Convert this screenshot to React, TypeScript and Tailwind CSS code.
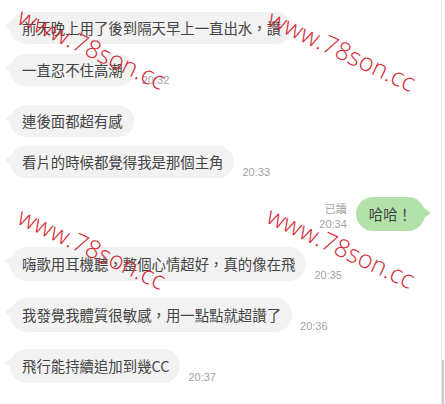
import React from "react";

const CJK = { fontFamily: '"Noto Sans CJK TC", "Noto Sans", sans-serif' };

function Left({ text, time, h, mt }: { text: string; time?: string; h: string; mt: string }) {
  return (
    <div className={`flex items-end pl-[10px] ${mt}`}>
      <div className={`relative flex items-center rounded-[17px] bg-[#f2f2f3] pl-3 pr-[11px] text-[14.4px] leading-[20px] text-[#444444] ${h}`}>
        <span className="absolute left-[-5px] top-[9px] h-0 w-0 border-y-[5px] border-r-[6px] border-y-transparent border-r-[#f2f2f3]" />
        <span className="whitespace-nowrap">{text}</span>
      </div>
      {time && (
        <span
          className="ml-[8px] text-[11px] leading-[12px] text-[#a3a3a3]"
          style={{ fontFamily: '"Liberation Sans", Arial, sans-serif' }}
        >
          {time}
        </span>
      )}
    </div>
  );
}

function Watermark({ pos }: { pos: string }) {
  return (
    <span
      className={`pointer-events-none absolute -translate-x-1/2 -translate-y-1/2 rotate-[25deg] whitespace-nowrap text-[25px] font-light leading-none text-[#d42a33] ${pos}`}
      style={{ fontFamily: '"Open Sans", "DejaVu Sans", sans-serif' }}
    >
      www.78son.cc
    </span>
  );
}

export default function App() {
  return (
    <div className="relative flex h-[404px] w-[445px] overflow-hidden bg-white" style={CJK}>
      <div className="flex w-[441px] flex-col">
        <Left text="前天晚上用了後到隔天早上一直出水，讚" h="h-[32px]" mt="mt-[12px]" />
        <Left text="一直忍不住高潮" time="20:32" h="h-[32px]" mt="mt-[10px]" />
        <Left text="連後面都超有感" h="h-[32px]" mt="mt-[19px]" />
        <Left text="看片的時候都覺得我是那個主角" time="20:33" h="h-[32px]" mt="mt-[9px]" />

        <div className="mt-[19px] flex items-end justify-end pr-[16px]">
          <div
            className="mr-[9px] flex flex-col items-end text-[11px] leading-[14px] text-[#a3a3a3]"
            style={{ fontFamily: '"Liberation Sans", "Noto Sans CJK TC", sans-serif' }}
          >
            <span>已讀</span>
            <span className="mt-[1px]">20:34</span>
          </div>
          <div className="relative flex h-[34px] items-center rounded-[17px] bg-[#b2e2aa] px-[13px] text-[14.4px] leading-[20px] text-[#444444]">
            <span className="absolute right-[-6px] top-[11px] h-0 w-0 border-y-[5px] border-l-[7px] border-y-transparent border-l-[#b2e2aa]" />
            <span className="whitespace-nowrap">哈哈！</span>
          </div>
        </div>

        <Left text="嗨歌用耳機聽，整個心情超好，真的像在飛" time="20:35" h="h-[34px]" mt="mt-[16px]" />
        <Left text="我發覺我體質很敏感，用一點點就超讚了" time="20:36" h="h-[34px]" mt="mt-[17px]" />
        <Left text="飛行能持續追加到幾CC" time="20:37" h="h-[34px]" mt="mt-[17px]" />
      </div>

      <div className="relative w-[4px] border-l border-l-[#ebebeb]">
        <div className="absolute bottom-0 left-0 h-[44px] w-[2px] bg-[#c9c9c9]" />
      </div>

      <Watermark pos="left-[92px] top-[48px]" />
      <Watermark pos="left-[342px] top-[50px]" />
      <Watermark pos="left-[92px] top-[248px]" />
      <Watermark pos="left-[341px] top-[247px]" />
    </div>
  );
}
